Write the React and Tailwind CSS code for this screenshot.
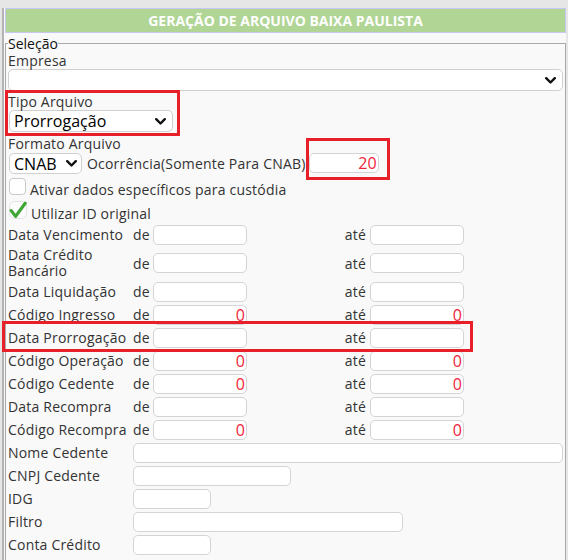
import React from "react";

const txt = "text-[14px] leading-[17px] tracking-[0.2px] text-[#333333]";

function Chevron({ className }) {
  return (
    <svg className={className} width="11" height="7" viewBox="0 0 11 7" fill="none">
      <polyline points="1.2,1.2 5.5,5.5 9.8,1.2" stroke="#111" strokeWidth="2.4" strokeLinecap="round" strokeLinejoin="round" />
    </svg>
  );
}

function Box({ w, value }) {
  return (
    <div className={`${w} h-[20px] shrink-0 bg-white border border-[#d4d4d4] rounded-[5px] flex items-center justify-end pr-[1px] text-[16px] leading-none text-[#f0243a]`}>
      {value}
    </div>
  );
}

function RangeRow({ label, value, tall }) {
  return (
    <div className={`flex items-center ${tall ? "h-[34px]" : "h-[23px]"}`}>
      <div className={`w-[125px] shrink-0 ${tall ? "text-[14px] leading-[16px] tracking-[0.2px] text-[#333333]" : txt}`}>{label}</div>
      <div className={`w-[20px] shrink-0 ${txt}`}>de</div>
      <Box w="w-[94px]" value={value} />
      <div className={`w-[123px] shrink-0 text-right pr-[4px] ${txt}`}>até</div>
      <Box w="w-[94px]" value={value} />
    </div>
  );
}

function SingleRow({ label, w }) {
  return (
    <div className="flex items-center h-[23px]">
      <div className={`w-[125px] shrink-0 ${txt}`}>{label}</div>
      <Box w={w} value="" />
    </div>
  );
}

export default function App() {
  return (
    <div className="relative w-[568px] h-[560px] overflow-hidden bg-[#e6e6e6] pt-[8px] pl-[2px] pr-[2px] font-['Open_Sans',sans-serif]">
      <div className="h-full border-l-[2px] border-[#b3b3b3] bg-[#f9f9f9] pl-[1px]">
        <div className="h-[25px] bg-[#b0d595] border border-[#c7c7f3] flex items-center justify-center text-white font-bold text-[14px]">
          GERAÇÃO DE ARQUIVO BAIXA PAULISTA
        </div>
        <fieldset className="mt-[3px] border border-[#a9a9a9] pl-[2px] pr-[2px] h-[600px]">
          <legend className="text-[14px] leading-[15px] text-[#111]">Seleção</legend>
          <div className={`mt-[1px] ${txt}`}>Empresa</div>
          <div className="h-[22px] bg-white border border-[#d0d0d0] rounded-[5px] flex items-center justify-end pr-[6px]">
            <Chevron />
          </div>
          <div className={`mt-[2px] ${txt}`}>Tipo Arquivo</div>
          <div className="ml-[1px] w-[164px] h-[22px] bg-white border border-[#d0d0d0] rounded-[5px] flex items-center justify-between pl-[4px] pr-[6px] text-[16px] text-black">
            <span>Prorrogação</span>
            <Chevron />
          </div>
          <div className={`mt-[3px] ${txt}`}>Formato Arquivo</div>
          <div className="mt-[1px] flex items-center h-[21px]">
            <div className="ml-[1px] w-[73px] h-[21px] bg-white border border-[#d0d0d0] rounded-[5px] flex items-center justify-between pl-[4px] pr-[4px] text-[16px] text-black">
              <span>CNAB</span>
              <Chevron />
            </div>
            <div className={`ml-[5px] ${txt}`}>Ocorrência(Somente Para CNAB)</div>
            <div className="ml-[3px] self-start">
              <Box w="w-[70px]" value="20" />
            </div>
          </div>
          <div className="mt-[4px] flex items-start">
            <div className="ml-[1px] w-[17px] h-[17px] bg-white border border-[#c9c9c9] rounded-[4px]" />
            <div className={`ml-[4px] mt-[3px] ${txt}`}>Ativar dados específicos para custódia</div>
          </div>
          <div className="mt-[3px] flex items-start">
            <svg className="ml-[1px]" width="18" height="18" viewBox="0 0 18 18">
              <rect x="0.5" y="0.5" width="17" height="17" rx="5" fill="#fbfbfb" stroke="#e2e2e2" />
              <path d="M2.2 9.6 L6.6 15.4 L16.2 2.2" fill="none" stroke="#3fa535" strokeWidth="3.2" strokeLinecap="round" strokeLinejoin="round" />
            </svg>
            <div className={`ml-[4px] mt-[4px] ${txt}`}>Utilizar ID original</div>
          </div>
          <div className="mt-[1px]">
            <RangeRow label="Data Vencimento" value="" />
            <RangeRow label={<>Data Crédito<br />Bancário</>} value="" tall />
            <RangeRow label="Data Liquidação" value="" />
            <RangeRow label="Código Ingresso" value="0" />
            <RangeRow label="Data Prorrogação" value="" />
            <RangeRow label="Código Operação" value="0" />
            <RangeRow label="Código Cedente" value="0" />
            <RangeRow label="Data Recompra" value="" />
            <RangeRow label="Código Recompra" value="0" />
            <SingleRow label="Nome Cedente" w="w-[430px]" />
            <SingleRow label="CNPJ Cedente" w="w-[158px]" />
            <SingleRow label="IDG" w="w-[78px]" />
            <SingleRow label="Filtro" w="w-[270px]" />
            <SingleRow label="Conta Crédito" w="w-[78px]" />
          </div>
        </fieldset>
      </div>
      <div className="absolute left-[5px] top-[90px] w-[175px] h-[46px] border-[3px] border-[#e8202a]" />
      <div className="absolute left-[306px] top-[138px] w-[84px] h-[42px] border-[3px] border-[#e8202a]" />
      <div className="absolute left-[2px] top-[321px] w-[471px] h-[31px] border-[3px] border-[#e8202a]" />
    </div>
  );
}
